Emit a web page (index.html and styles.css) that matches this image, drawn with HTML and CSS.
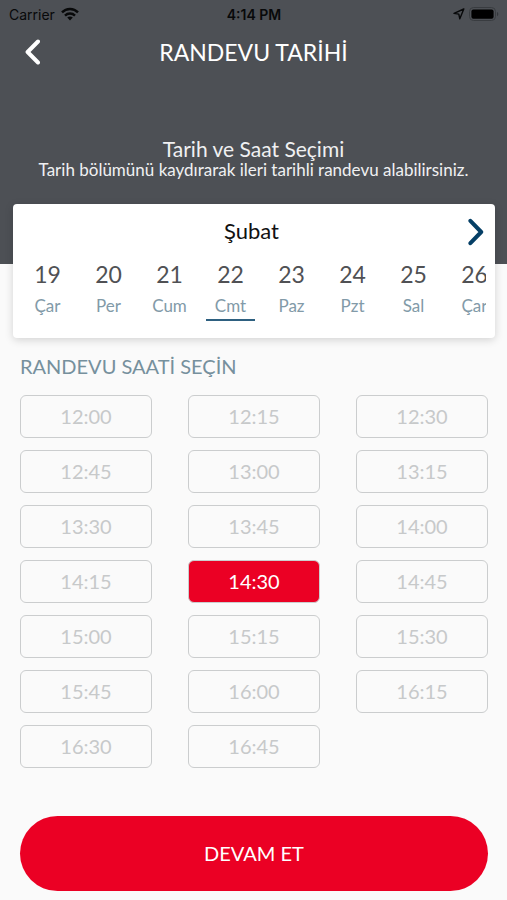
FILE: index.html
```
<!DOCTYPE html>
<html lang="tr">
<head>
  <meta charset="UTF-8">
  <meta name="viewport" content="width=device-width, initial-scale=1.0">
  <title>Randevu Tarihi</title>
  <link rel="stylesheet" href="styles.css">
</head>
<body>
  <header class="header">
    <div class="status-bar">
      <div class="carrier">
        <span>Carrier</span>
        <svg width="18" height="14" viewBox="0 0 18 14" fill="none" stroke="#08090a" stroke-width="2.4">
          <path d="M1 5.4C5.4 0.8 12.6 0.8 17 5.4"/>
          <path d="M4 8.6C6.8 5.8 11.2 5.8 14 8.6"/>
          <path d="M9 13.4L6.2 10.6C7.8 9.2 10.2 9.2 11.8 10.6Z" fill="#08090a" stroke="none"/>
        </svg>
      </div>
      <span class="time">4:14 PM</span>
      <div class="indicators">
        <svg width="12" height="12" viewBox="0 0 12 12" fill="none" stroke="#08090a" stroke-width="1.4" stroke-linejoin="round">
          <path d="M10.8 1L1 5.4L5.8 6.1L6.8 10.8Z"/>
        </svg>
        <svg width="30" height="15" viewBox="0 0 30 15">
          <rect x="0.5" y="0.5" width="26" height="13" rx="4" fill="none" stroke="#393c40"/>
          <rect x="2.4" y="2.4" width="22.2" height="9.4" rx="2" fill="#000"/>
          <path d="M28 5C29.8 5.6 29.8 8.6 28 9.2Z" fill="#33363a"/>
        </svg>
      </div>
    </div>

    <div class="nav-bar">
      <button class="icon-button" aria-label="Geri">
        <svg width="16" height="26" viewBox="0 0 16 26" fill="none" stroke="#fff" stroke-width="4" stroke-linecap="round" stroke-linejoin="round">
          <path d="M14 2.5L3.6 13L14 23.5"/>
        </svg>
      </button>
      <h1>RANDEVU TARİHİ</h1>
    </div>

    <div class="intro">
      <h2>Tarih ve Saat Seçimi</h2>
      <p>Tarih bölümünü kaydırarak ileri tarihli randevu alabilirsiniz.</p>
    </div>
  </header>

  <main>
    <section class="calendar">
      <div class="month">
        <h3>Şubat</h3>
        <button class="icon-button" aria-label="Sonraki">
          <svg width="16" height="28" viewBox="0 0 16 28" fill="none" stroke="#053f66" stroke-width="4" stroke-linecap="round" stroke-linejoin="round">
            <path d="M2.4 2.8L13.2 14L2.4 25.2"/>
          </svg>
        </button>
      </div>
      <div class="days">
        <button class="day"><b>19</b><span>Çar</span></button>
        <button class="day"><b>20</b><span>Per</span></button>
        <button class="day"><b>21</b><span>Cum</span></button>
        <button class="day selected"><b>22</b><span>Cmt</span></button>
        <button class="day"><b>23</b><span>Paz</span></button>
        <button class="day"><b>24</b><span>Pzt</span></button>
        <button class="day"><b>25</b><span>Sal</span></button>
        <button class="day"><b>26</b><span>Çar</span></button>
      </div>
    </section>

    <section class="times">
      <h2>RANDEVU SAATİ SEÇİN</h2>
      <div class="slots">
        <button class="slot">12:00</button>
        <button class="slot">12:15</button>
        <button class="slot">12:30</button>
        <button class="slot">12:45</button>
        <button class="slot">13:00</button>
        <button class="slot">13:15</button>
        <button class="slot">13:30</button>
        <button class="slot">13:45</button>
        <button class="slot">14:00</button>
        <button class="slot">14:15</button>
        <button class="slot selected">14:30</button>
        <button class="slot">14:45</button>
        <button class="slot">15:00</button>
        <button class="slot">15:15</button>
        <button class="slot">15:30</button>
        <button class="slot">15:45</button>
        <button class="slot">16:00</button>
        <button class="slot">16:15</button>
        <button class="slot">16:30</button>
        <button class="slot">16:45</button>
      </div>
      <button class="continue">DEVAM ET</button>
    </section>
  </main>
</body>
</html>
```
FILE: styles.css
```
* {
  box-sizing: border-box;
}

body {
  font-family: Lato, "Liberation Sans", sans-serif;
  margin: 0;
  background-color: #fafafa;
  color: #111;
}

h1, h2, h3, p {
  margin: 0;
  font-weight: normal;
}

button {
  font-family: inherit;
  padding: 0;
  border: none;
  background: none;
  cursor: pointer;
}

svg {
  display: block;
}

.header {
  height: 264px;
  background-color: #4d5055;
  color: #fff;
}

/* Status bar */
.status-bar {
  display: grid;
  grid-template-columns: 1fr auto 1fr;
  align-items: center;
  height: 28px;
  padding: 0 8px 0 9px;
  font-family: Inter, sans-serif;
  font-size: 14px;
  color: #08090a;
}

.carrier {
  display: flex;
  align-items: center;
  gap: 6px;
}

.time {
  font-weight: 600;
}

.indicators {
  display: flex;
  align-items: center;
  justify-content: flex-end;
  gap: 4px;
}

.nav-bar {
  display: grid;
  grid-template-columns: 24px 1fr 24px;
  align-items: center;
  height: 48px;
  padding: 0 24px;
}

.nav-bar h1 {
  font-size: 23px;
  line-height: 28px;
  text-align: center;
}

.intro {
  padding-top: 62px;
  text-align: center;
  color: #f0f0f2;
}

.intro h2 {
  font-size: 21px;
  line-height: 22px;
}

.intro p {
  font-size: 17px;
  line-height: 20px;
}

/* Date picker, pulled up over the header */
.calendar {
  position: relative;
  margin: -60px 12px 0 13px;
  padding: 12px 9px 17px 10px;
  border-radius: 4px;
  background-color: #fff;
  box-shadow: 0 2px 8px rgba(0, 0, 0, 0.16);
}

.month {
  display: grid;
  grid-template-columns: 12px 1fr 16px;
  align-items: center;
  height: 32px;
  padding-right: 2px;
}

.month h3 {
  grid-column: 2;
  padding-bottom: 2px;
  font-size: 22px;
  line-height: 28px;
  text-align: center;
}

.days {
  display: flex;
  gap: 12px;
  margin-top: 12px;
  overflow: hidden;
}

.day {
  flex: 0 0 49px;
  height: 61px;
  border-bottom: 2px solid transparent;
}

.day b {
  display: block;
  font-size: 23px;
  line-height: 28px;
  font-weight: normal;
  color: #505154;
}

.day span {
  display: block;
  padding: 8px 0 3px;
  font-size: 17px;
  line-height: 20px;
  color: #829aa8;
}

.day.selected {
  border-bottom-color: #2e6080;
}

/* Time slots */
.times {
  padding: 14px 19px 8px 20px;
}

.times h2 {
  font-size: 20px;
  line-height: 28px;
  color: #76909d;
}

.slots {
  display: grid;
  grid-template-columns: repeat(3, 1fr);
  gap: 12px 36px;
  margin-top: 15px;
}

.slot {
  height: 43px;
  padding-bottom: 2px;
  border: 1px solid #cbcdce;
  border-radius: 6px;
  font-size: 20px;
  color: #c7c9ca;
}

.slot.selected {
  background-color: #eb0024;
  color: #fff;
}

.continue {
  width: 100%;
  height: 75px;
  margin-top: 48px;
  padding-bottom: 2px;
  border-radius: 38px;
  background-color: #eb0024;
  font-size: 20px;
  color: #fff;
}
```
